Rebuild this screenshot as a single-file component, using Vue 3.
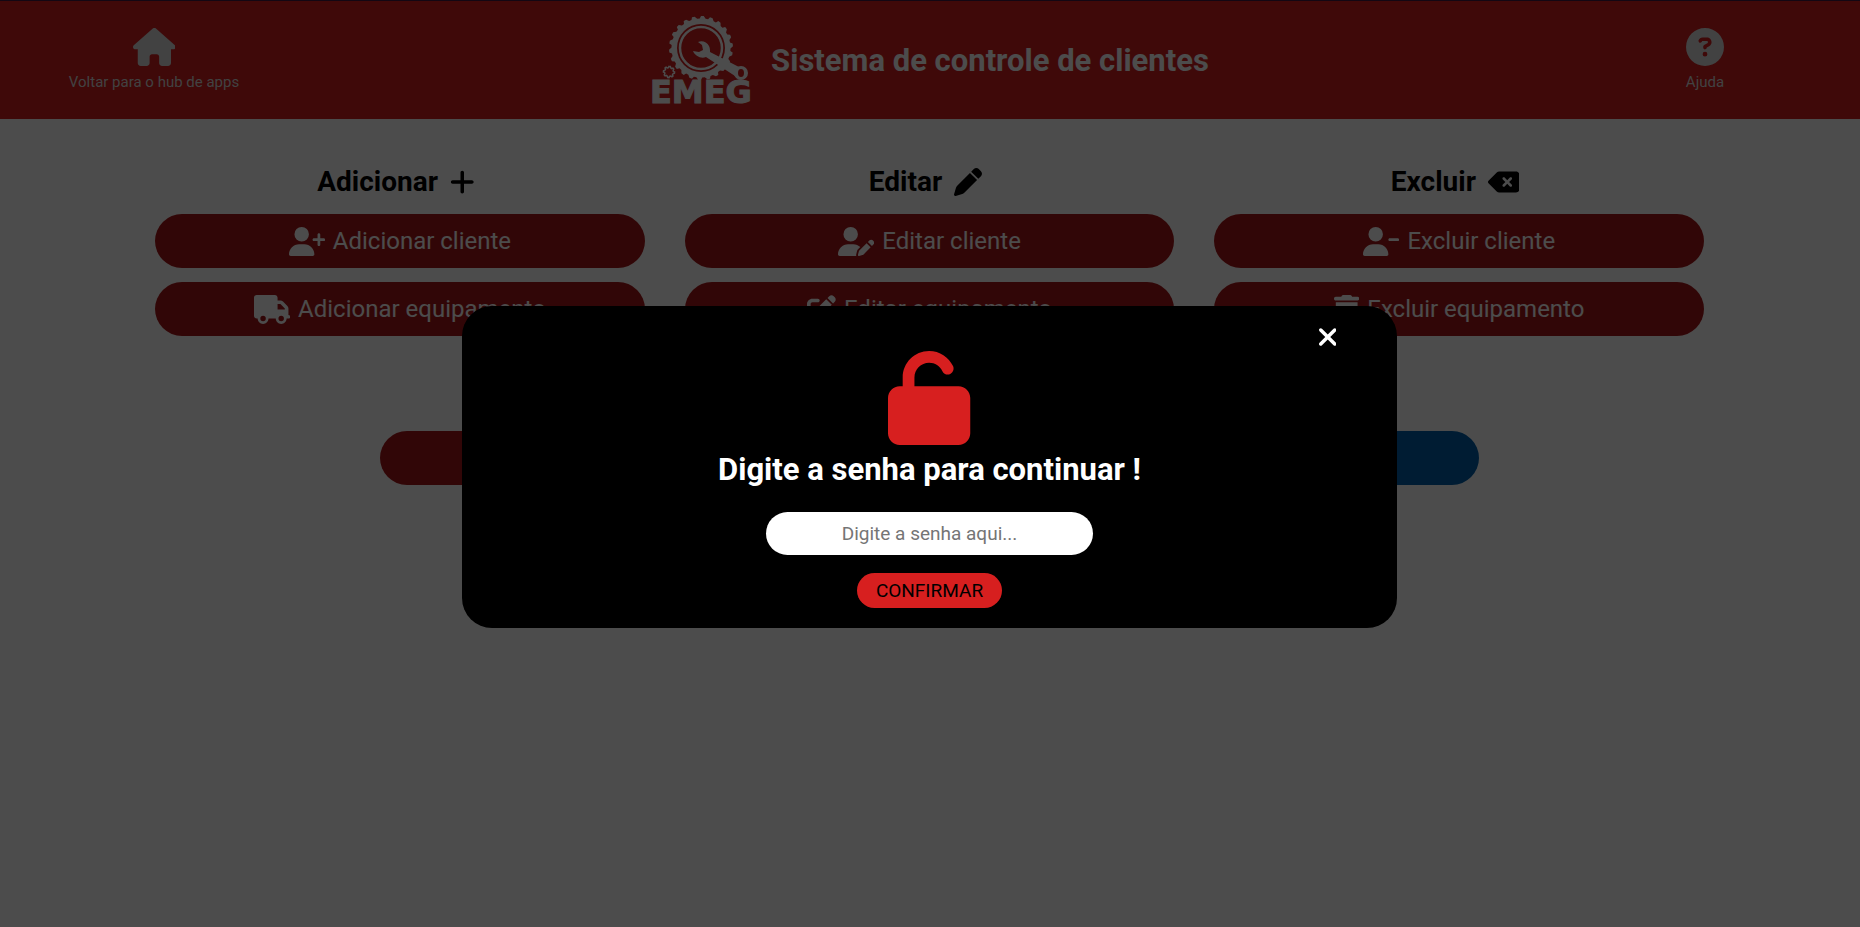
<script setup>
import { ref } from 'vue'

const password = ref('')

const person = 'M96 128a128 128 0 1 1 256 0A128 128 0 1 1 96 128zM0 482.3C0 383.8 79.8 304 178.3 304h91.4C368.2 304 448 383.8 448 482.3c0 16.4-13.3 29.7-29.7 29.7H29.7C13.3 512 0 498.7 0 482.3z'

const columns = [
  {
    title: 'Adicionar',
    icon: { w: 448, d: 'M256 80c0-17.7-14.3-32-32-32s-32 14.3-32 32V224H48c-17.7 0-32 14.3-32 32s14.3 32 32 32H192V432c0 17.7 14.3 32 32 32s32-14.3 32-32V288H400c17.7 0 32-14.3 32-32s-14.3-32-32-32H256V80z' },
    actions: [
      {
        label: 'Adicionar cliente',
        w: 640,
        d: person + 'M504 312V248H440c-13.3 0-24-10.7-24-24s10.7-24 24-24h64V136c0-13.3 10.7-24 24-24s24 10.7 24 24v64h64c13.3 0 24 10.7 24 24s-10.7 24-24 24H552v64c0 13.3-10.7 24-24 24s-24-10.7-24-24z',
      },
      {
        label: 'Adicionar equipamento',
        w: 640,
        d: 'M48 0C21.5 0 0 21.5 0 48V368c0 26.5 21.5 48 48 48H64c0 53 43 96 96 96s96-43 96-96H384c0 53 43 96 96 96s96-43 96-96h32c17.7 0 32-14.3 32-32s-14.3-32-32-32V288 256 237.3c0-17-6.7-33.3-18.7-45.3L512 114.7c-12-12-28.3-18.7-45.3-18.7H416V48c0-26.5-21.5-48-48-48H48zM416 160h50.7L544 237.3V256H416V160zM112 416a48 48 0 1 1 96 0 48 48 0 1 1 -96 0zm368-48a48 48 0 1 1 0 96 48 48 0 1 1 0-96z',
      },
    ],
  },
  {
    title: 'Editar',
    icon: { w: 512, d: 'M362.7 19.3L314.3 67.7 444.3 197.7l48.4-48.4c25-25 25-65.5 0-90.5L453.3 19.3c-25-25-65.5-25-90.5 0zm-71 71L58.6 323.5c-10.4 10.4-18 23.3-22.2 37.4L1 481.2C-1.5 489.7 .8 498.8 7 505s15.3 8.5 23.7 6.1l120.3-35.4c14.1-4.2 27-11.8 37.4-22.2L421.7 220.3 291.7 90.3z' },
    actions: [
      {
        label: 'Editar cliente',
        w: 640,
        d: 'M224 256A128 128 0 1 0 224 0a128 128 0 1 0 0 256zm-45.7 48C79.8 304 0 383.8 0 482.3C0 498.7 13.3 512 29.7 512H322.8c-3.1-8.8-3.7-18.4-1.4-27.8l15-60.1c2.8-11.3 8.6-21.5 16.8-29.7l40.3-40.3c-32.1-31-75.7-50.1-123.9-50.1H178.3zm435.5-68.3c-15.6-15.6-40.9-15.6-56.6 0l-29.4 29.4 71 71 29.4-29.4c15.6-15.6 15.6-40.9 0-56.6l-14.4-14.4zM375.9 417c-4.1 4.1-7 9.2-8.4 14.9l-15 60.1c-1.4 5.5 .2 11.2 4.2 15.2s9.7 5.6 15.2 4.2l60.1-15c5.6-1.4 10.8-4.3 14.9-8.4L576.1 358.7l-71-71L375.9 417z',
      },
      {
        label: 'Editar equipamento',
        w: 512,
        d: 'M471.6 21.7c-21.9-21.9-57.3-21.9-79.2 0L362.3 51.7l97.9 97.9 30.1-30.1c21.9-21.9 21.9-57.3 0-79.2L471.6 21.7zm-299.2 220c-6.1 6.1-10.8 13.6-13.5 21.9l-29.6 88.8c-2.9 8.6-.6 18.1 5.8 24.6s15.9 8.7 24.6 5.8l88.8-29.6c8.2-2.7 15.7-7.4 21.9-13.5L437.7 172.3 339.7 74.3 172.4 241.7zM96 64C43 64 0 107 0 160V416c0 53 43 96 96 96H352c53 0 96-43 96-96V320c0-17.7-14.3-32-32-32s-32 14.3-32 32v96c0 17.7-14.3 32-32 32H96c-17.7 0-32-14.3-32-32V160c0-17.7 14.3-32 32-32h96c17.7 0 32-14.3 32-32s-14.3-32-32-32H96z',
      },
    ],
  },
  {
    title: 'Excluir',
    icon: { w: 576, d: 'M576 128c0-35.3-28.7-64-64-64H205.3c-17 0-33.3 6.7-45.3 18.7L9.4 233.4c-6 6-9.4 14.1-9.4 22.6s3.4 16.6 9.4 22.6L160 429.3c12 12 28.3 18.7 45.3 18.7H512c35.3 0 64-28.7 64-64V128zM271 175c9.4-9.4 24.6-9.4 33.9 0l47 47 47-47c9.4-9.4 24.6-9.4 33.9 0s9.4 24.6 0 33.9l-47 47 47 47c9.4 9.4 9.4 24.6 0 33.9s-24.6 9.4-33.9 0l-47-47-47 47c-9.4 9.4-24.6 9.4-33.9 0s-9.4-24.6 0-33.9l47-47-47-47c-9.4-9.4-9.4-24.6 0-33.9z' },
    actions: [
      {
        label: 'Excluir cliente',
        w: 640,
        d: person + 'M472 200H616c13.3 0 24 10.7 24 24s-10.7 24-24 24H472c-13.3 0-24-10.7-24-24s10.7-24 24-24z',
      },
      {
        label: 'Excluir equipamento',
        w: 448,
        d: 'M135.2 17.7C140.6 6.8 151.7 0 163.8 0H284.2c12.1 0 23.2 6.8 28.6 17.7L320 32h96c17.7 0 32 14.3 32 32s-14.3 32-32 32H32C14.3 96 0 81.7 0 64S14.3 32 32 32h96l7.2-14.3zM32 128H416V448c0 35.3-28.7 64-64 64H96c-35.3 0-64-28.7-64-64V128zm96 64c-8.8 0-16 7.2-16 16V432c0 8.8 7.2 16 16 16s16-7.2 16-16V208c0-8.8-7.2-16-16-16zm96 0c-8.8 0-16 7.2-16 16V432c0 8.8 7.2 16 16 16s16-7.2 16-16V208c0-8.8-7.2-16-16-16zm96 0c-8.8 0-16 7.2-16 16V432c0 8.8 7.2 16 16 16s16-7.2 16-16V208c0-8.8-7.2-16-16-16z',
      },
    ],
  },
]

// Outline of a toothed wheel: each tooth rises steeply and falls back along a slope.
function wheel(cx, cy, teeth, outer, inner) {
  const step = (Math.PI * 2) / teeth
  const at = (r, a) => `${(cx + r * Math.cos(a)).toFixed(2)} ${(cy + r * Math.sin(a)).toFixed(2)}`
  let d = ''
  for (let i = 0; i < teeth; i++) {
    const a = i * step - Math.PI / 2
    d += `${i ? 'L' : 'M'}${at(outer, a)}L${at(outer, a + step * 0.3)}L${at(inner, a + step * 0.55)}L${at(inner, a + step * 0.85)}`
  }
  return d + 'Z'
}

const bigWheel = wheel(49, 32, 22, 32, 29.5)
const smallWheel = wheel(17, 56, 8, 5.6, 4.4)
</script>

<template>
  <div class="page">
    <header class="topbar">
      <a class="nav-link" href="#">
        <svg class="nav-icon" viewBox="0 0 576 512" aria-hidden="true">
          <path d="M575.8 255.5c0 18-15 32.1-32 32.1h-32l.7 160.2c0 2.7-.2 5.4-.5 8.1V472c0 22.1-17.9 40-40 40H456c-1.1 0-2.2 0-3.3-.1c-1.4 .1-2.8 .1-4.2 .1H416 392c-22.1 0-40-17.9-40-40V448 384c0-17.7-14.3-32-32-32H256c-17.7 0-32 14.3-32 32v64 24c0 22.1-17.9 40-40 40H160 128.1c-1.5 0-3-.1-4.5-.2c-1.2 .1-2.4 .2-3.6 .2H104c-22.1 0-40-17.9-40-40V360c0-.9 0-1.9 .1-2.8V287.6H32c-18 0-32-14-32-32.1c0-9 3-17 10-24L266.4 8c7-7 15-8 22-8s15 2 21 7L564.8 231.5c8 7 12 15 11 24z" />
        </svg>
        <span>Voltar para o hub de apps</span>
      </a>

      <div class="brand">
        <svg class="logo" viewBox="-3 0 106 96" aria-hidden="true">
          <path class="logo-fill" :d="bigWheel" />
          <circle class="logo-cut" cx="49" cy="32" r="24" />
          <circle class="logo-ring" cx="49" cy="32" r="21" />
          <path class="logo-fill" d="M46 26C50 24 55 26 57 30C58 32 58 34 58 36L87 51L83 60L54 41C49 43 43 40 41 35L47 36L51 34L50 29Z" />
          <circle class="logo-fill" cx="89" cy="57" r="7" />
          <ellipse class="logo-cut" cx="89" cy="57" rx="3" ry="4" />
          <path class="logo-line" :d="smallWheel" />
          <text class="logo-text" x="-2" y="87">EMEG</text>
        </svg>
        <h1>Sistema de controle de clientes</h1>
      </div>

      <a class="nav-link" href="#">
        <svg class="nav-icon" viewBox="0 0 512 512" aria-hidden="true">
          <path d="M256 512A256 256 0 1 0 256 0a256 256 0 1 0 0 512zM169.800 165.300c7.900-22.300 29.100-37.300 52.800-37.300h58.300c34.900 0 63.100 28.300 63.100 63.100c0 22.600-12.100 43.500-31.700 54.800L280 264.400c-.2 13-10.900 23.600-24 23.600c-13.300 0-24-10.700-24-24V250.500c0-8.600 4.600-16.500 12.100-20.800l44.300-25.400c4.700-2.700 7.600-7.700 7.600-13.100c0-8.400-6.800-15.100-15.100-15.100H222.600c-3.400 0-6.400 2.100-7.500 5.300l-.4 1.200c-4.400 12.500-18.200 19-30.600 14.600s-19-18.200-14.600-30.600l.4-1.200zM224 352a32 32 0 1 1 64 0 32 32 0 1 1 -64 0z" />
        </svg>
        <span>Ajuda</span>
      </a>
    </header>

    <main class="content">
      <div class="columns">
        <section v-for="column in columns" :key="column.title" class="column">
          <h2>
            {{ column.title }}
            <svg class="heading-icon" :viewBox="`0 0 ${column.icon.w} 512`" aria-hidden="true"><path :d="column.icon.d" /></svg>
          </h2>
          <button v-for="action in column.actions" :key="action.label" class="action" type="button">
            <svg class="action-icon" :viewBox="`0 0 ${action.w} 512`" aria-hidden="true"><path :d="action.d" /></svg>
            {{ action.label }}
          </button>
        </section>
      </div>
      <div class="extras">
        <div class="action"></div>
        <div class="action action-blue"></div>
      </div>
    </main>

    <div class="overlay">
      <form class="modal" role="dialog" aria-labelledby="modal-title" @submit.prevent>
        <button class="close" type="button" aria-label="Fechar">
          <svg viewBox="0 0 320 512" aria-hidden="true">
            <path d="M310.6 150.6c12.5-12.5 12.5-32.8 0-45.3s-32.8-12.5-45.3 0L160 210.7 54.6 105.4c-12.5-12.5-32.8-12.5-45.3 0s-12.5 32.8 0 45.3L114.7 256 9.4 361.4c-12.5 12.5-12.5 32.8 0 45.3s32.8 12.5 45.3 0L160 301.3 265.4 406.6c12.5 12.5 32.8 12.5 45.3 0s12.5-32.8 0-45.3L205.3 256 310.6 150.6z" />
          </svg>
        </button>
        <svg class="lock" viewBox="0 0 448 512" aria-hidden="true">
          <path d="M144 144c0-44.2 35.8-80 80-80c31.9 0 59.4 18.6 72.3 45.7c7.6 16 26.7 22.8 42.6 15.2s22.8-26.7 15.2-42.6C331 33.7 281.5 0 224 0C144.5 0 80 64.5 80 144v48H64c-35.3 0-64 28.7-64 64V448c0 35.3 28.7 64 64 64H384c35.3 0 64-28.7 64-64V256c0-35.3-28.7-64-64-64H144V144z" />
        </svg>
        <label id="modal-title" class="modal-title" for="password">Digite a senha para continuar !</label>
        <input id="password" v-model="password" class="password" type="password" placeholder="Digite a senha aqui..." />
        <button class="confirm" type="submit">CONFIRMAR</button>
      </form>
    </div>
  </div>
</template>

<style>
body {
  margin: 0;
}
</style>

<style scoped>
.page {
  min-height: 100vh;
  box-sizing: border-box;
  background: #fff;
  color: #000;
  font-family: Roboto, "Liberation Sans", sans-serif;
}

svg {
  display: block;
  fill: currentColor;
}

h1,
h2 {
  margin: 0;
}

button,
input {
  border: 0;
  font-family: inherit;
}

.topbar {
  display: grid;
  grid-template-columns: 308px 1fr 310px;
  align-items: center;
  height: 119px;
  box-sizing: border-box;
  border-top: 1px solid #401a40;
  background: #d31e1e;
  color: #fff;
}

.nav-link {
  display: flex;
  flex-direction: column;
  align-items: center;
  gap: 6px;
  color: #dcdcdc;
  font-size: 15px;
  line-height: 20px;
  text-decoration: none;
}

.nav-icon {
  height: 38px;
}

.brand {
  display: flex;
  align-items: center;
  justify-content: center;
  gap: 16px;
}

.brand h1 {
  padding-top: 2px;
  font-size: 31px;
  line-height: 40px;
}

.logo {
  width: 106px;
  height: 96px;
  margin-bottom: -8px;
}

.logo-fill {
  fill: #fff;
}

.logo-cut {
  fill: #d31e1e;
}

.logo-ring {
  fill: none;
  stroke: #fff;
  stroke-width: 2.5;
}

.logo-line {
  fill: none;
  stroke: #fff;
  stroke-width: 1.5;
}

.logo-text {
  fill: #fff;
  stroke: #fff;
  stroke-width: 1;
  font-family: "DejaVu Sans", sans-serif;
  font-size: 32px;
  font-weight: 700;
}

.content {
  padding: 44px 156px 0 155px;
}

.columns {
  display: grid;
  grid-template-columns: repeat(3, 1fr);
  gap: 40px;
}

.column {
  display: flex;
  flex-direction: column;
  gap: 14px;
}

.column h2 {
  display: flex;
  align-items: center;
  justify-content: center;
  gap: 12px;
  font-size: 28px;
  font-weight: 700;
  line-height: 37px;
}

.heading-icon {
  height: 28px;
  margin-right: 8px;
}

.action {
  display: flex;
  align-items: center;
  justify-content: center;
  gap: 8px;
  height: 54px;
  border-radius: 27px;
  background: #a61718;
  color: #fff;
  font-size: 24px;
}

.action-icon {
  height: 29px;
}

.action-blue {
  background: #0060ab;
}

.extras {
  display: grid;
  grid-template-columns: 1fr 1fr;
  gap: 40px;
  margin-top: 95px;
  padding: 0 225px;
}

.overlay {
  position: fixed;
  inset: 0;
  display: flex;
  align-items: flex-start;
  justify-content: center;
  padding: 33vh 1px 0 0;
  background: rgba(0, 0, 0, 0.7);
}

.modal {
  position: relative;
  display: flex;
  flex-direction: column;
  align-items: center;
  width: 935px;
  max-width: 90%;
  box-sizing: border-box;
  padding: 45px 20px 20px;
  border-radius: 30px;
  background: #000;
  color: #fff;
}

.close {
  position: absolute;
  top: 17px;
  right: 61px;
  padding: 0;
  background: none;
  color: #fff;
}

.close svg {
  height: 28px;
}

.lock {
  height: 94px;
  color: #d71f1f;
}

.modal-title {
  margin: 4px 0 22px;
  font-size: 31px;
  font-weight: 700;
  line-height: 41px;
}

.password {
  width: 327px;
  height: 43px;
  box-sizing: border-box;
  padding: 0 20px;
  border-radius: 22px;
  background: #fff;
  font-size: 19px;
  text-align: center;
}

.password::placeholder {
  color: #757575;
}

.confirm {
  height: 35px;
  margin-top: 18px;
  padding: 0 19px;
  border-radius: 18px;
  background: #d71f1f;
  color: #000;
  font-size: 19px;
}
</style>
